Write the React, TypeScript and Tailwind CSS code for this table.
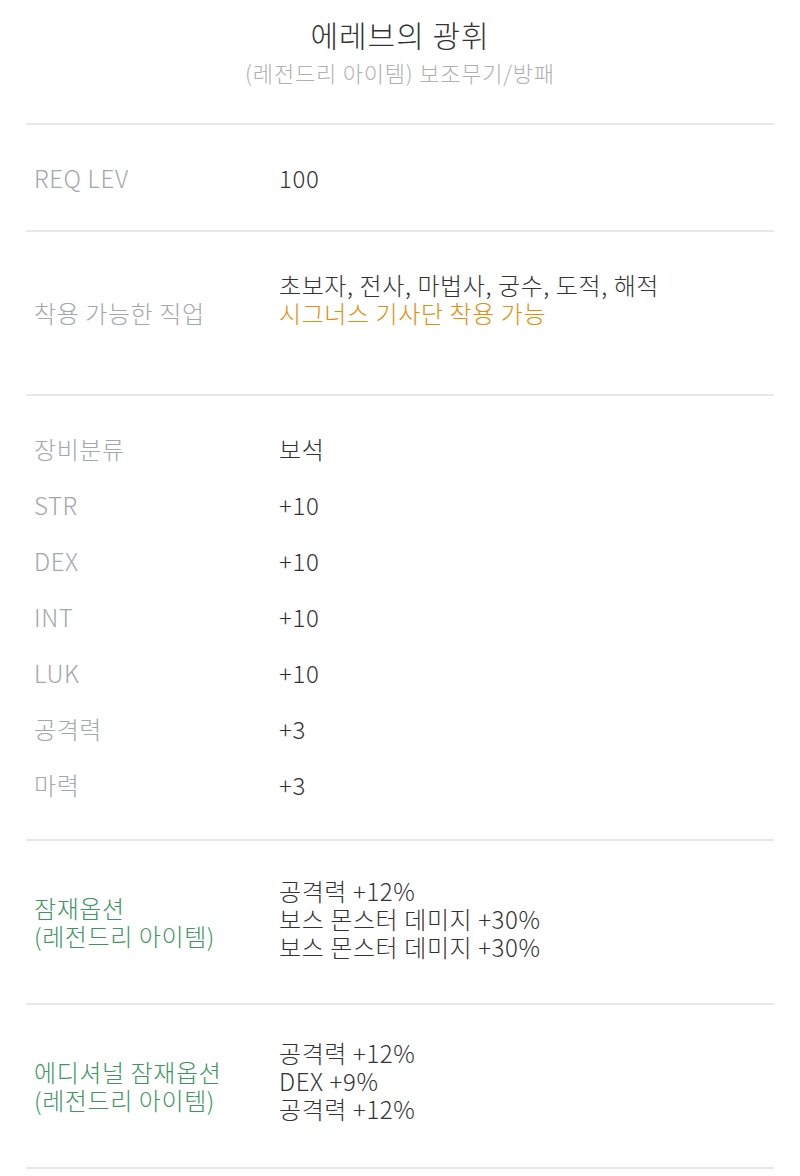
import React from 'react';

const font = { fontFamily: '"Noto Sans CJK KR", "Noto Sans", sans-serif' };

interface Stat {
  label: string;
  value: string;
}

const stats: Stat[] = [
  { label: '장비분류', value: '보석' },
  { label: 'STR', value: '+10' },
  { label: 'DEX', value: '+10' },
  { label: 'INT', value: '+10' },
  { label: 'LUK', value: '+10' },
  { label: '공격력', value: '+3' },
  { label: '마력', value: '+3' },
];

const Row = ({
  label,
  children,
  labelClass = 'text-[#a3a7ae]',
  className = '',
}: {
  label: React.ReactNode;
  children: React.ReactNode;
  labelClass?: string;
  className?: string;
}) => (
  <div className={`grid grid-cols-[253px_1fr] items-center ${className}`}>
    <div className={`pl-2 ${labelClass}`}>{label}</div>
    <div className="text-[#333333]">{children}</div>
  </div>
);

const App = () => {
  return (
    <div
      className="min-h-screen bg-white px-[26px] font-light text-[24px] leading-[28px] tracking-[0.6px]"
      style={font}
    >
      <div className="pt-[14px] pb-[37px] text-center">
        <h1 className="text-[30px] leading-[40px] font-light text-[#333333] tracking-[1px]">에레브의 광휘</h1>
        <p className="mt-[4px] text-[22px] leading-[28px] text-[#b0b0b0] tracking-[0.8px]">
          (레전드리 아이템) 보조무기/방패
        </p>
      </div>

      <div className="border-t-2 border-[#e8e8e8]">
        <Row label="REQ LEV" className="h-[105px]">
          100
        </Row>
      </div>

      <div className="border-t-2 border-[#e8e8e8]">
        <Row label="착용 가능한 직업" className="h-[162px]">
          <div className="pb-[28px]">
            <div>초보자, 전사, 마법사, 궁수, 도적, 해적</div>
            <div className="text-[#e38f0c]">시그너스 기사단 착용 가능</div>
          </div>
        </Row>
      </div>

      <div className="border-t-2 border-[#e8e8e8] pt-[25px] pb-[26px]">
        {stats.map((s) => (
          <Row key={s.label} label={s.label} className="h-[56px]">
            {s.value}
          </Row>
        ))}
      </div>

      <div className="border-t-2 border-[#e8e8e8]">
        <Row
          label={
            <>
              <div>잠재옵션</div>
              <div>(레전드리 아이템)</div>
            </>
          }
          labelClass="text-[#3d9562]"
          className="h-[162px]"
        >
          <div className="-mt-1.5">
            <div>공격력 +12%</div>
            <div>보스 몬스터 데미지 +30%</div>
            <div>보스 몬스터 데미지 +30%</div>
          </div>
        </Row>
      </div>

      <div className="border-t-2 border-[#e8e8e8]">
        <Row
          label={
            <>
              <div>에디셔널 잠재옵션</div>
              <div>(레전드리 아이템)</div>
            </>
          }
          labelClass="text-[#3d9562]"
          className="h-[162px]"
        >
          <div className="-mt-2.5">
            <div>공격력 +12%</div>
            <div>DEX +9%</div>
            <div>공격력 +12%</div>
          </div>
        </Row>
      </div>

      <div className="border-t-2 border-[#e8e8e8]" />
    </div>
  );
};

export default App;
